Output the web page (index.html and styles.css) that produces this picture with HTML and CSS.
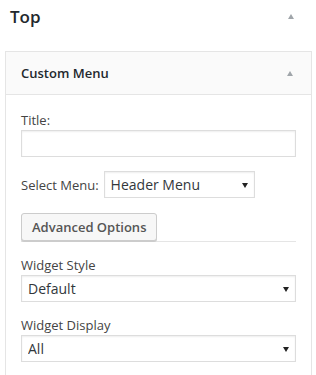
FILE: index.html
```html
<!DOCTYPE html>
<html lang="en">
<head>
    <meta charset="UTF-8">
    <meta name="viewport" content="width=device-width, initial-scale=1.0">
    <title>Widgets</title>
    <link rel="stylesheet" href="styles.css">
</head>
<body>
<div class="sidebar">
    <div class="sidebar-name">
        <h2>Top</h2>
        <span class="toggle"></span>
    </div>
    <div class="widget">
        <div class="widget-top">
            <h3>Custom Menu</h3>
            <span class="toggle"></span>
        </div>
        <div class="widget-inside">
            <div class="field">
                <label>Title:</label>
                <input type="text" class="text-input">
            </div>
            <div class="field inline">
                <label>Select Menu:</label>
                <div class="select small">
                    <select><option>Header Menu</option></select>
                </div>
            </div>
            <div class="advanced">
                <button>Advanced Options</button>
            </div>
            <div class="field">
                <label>Widget Style</label>
                <div class="select">
                    <select><option>Default</option></select>
                </div>
            </div>
            <div class="field">
                <label>Widget Display</label>
                <div class="select">
                    <select><option>All</option></select>
                </div>
            </div>
        </div>
    </div>
</div>
</body>
</html>
```

FILE: styles.css
```css
*{
    margin: 0;
    padding: 0;
    box-sizing: border-box;
}
body{
    background: #fff;
    font-family: "Open Sans", "Liberation Sans", sans-serif;
    font-size: 13px;
    color: #444;
}
.sidebar{
    padding: 0 4px 0 5px;
}
.sidebar-name{
    display: flex;
    justify-content: space-between;
    align-items: center;
    height: 32px;
    padding: 0 18px 0 5px;
    margin-bottom: 19px;
}
.sidebar-name h2{
    font-size: 17px;
    font-weight: 600;
    color: #23282d;
}
.toggle{
    width: 0;
    height: 0;
    border-left: 3.5px solid transparent;
    border-right: 3.5px solid transparent;
    border-bottom: 5px solid #a0a5aa;
}
.widget{
    border: 1px solid #e5e5e5;
    border-bottom: none;
    height: 330px;
}
.widget-top{
    display: flex;
    justify-content: space-between;
    align-items: center;
    height: 43px;
    padding: 0 18px 0 15px;
    background: #fafafa;
    border-bottom: 1px solid #e5e5e5;
}
.widget-top h3{
    font-size: 13px;
    font-weight: 600;
    color: #23282d;
}
.widget-inside{
    padding: 16px 15px 0 15px;
}
.field{
    margin-bottom: 14px;
}
.field label{
    display: block;
    line-height: 18px;
    margin-bottom: 1px;
}
.field.inline{
    display: flex;
    align-items: center;
}
.field.inline label{
    margin: 0 5px 0 0;
}
.text-input{
    display: block;
    width: 100%;
    height: 27px;
    border: 1px solid #ddd;
    box-shadow: inset 0 1px 2px rgba(0, 0, 0, 0.07);
    background: #fff;
}
.select{
    position: relative;
    width: 100%;
}
.select.small{
    width: 151px;
}
.select select{
    appearance: none;
    -webkit-appearance: none;
    display: block;
    width: 100%;
    height: 27px;
    padding: 0 20px 0 6px;
    border: 1px solid #ddd;
    border-radius: 0;
    background: #fff;
    font-family: "Open Sans", "Liberation Sans", sans-serif;
    font-size: 14px;
    color: #32373c;
    box-shadow: inset 0 1px 2px rgba(0, 0, 0, 0.07);
}
.select::after{
    content: "";
    position: absolute;
    right: 7px;
    top: 12px;
    border-left: 3px solid transparent;
    border-right: 3px solid transparent;
    border-top: 5px solid #222;
}
.advanced{
    margin-top: 15px;
    border-bottom: 1px solid #e5e5e5;
    margin-bottom: 14px;
}
.advanced button{
    display: block;
    height: 28px;
    padding: 0 10px;
    border: 1px solid #ccc;
    border-radius: 3px;
    background: #f7f7f7;
    box-shadow: 0 1px 0 #ccc;
    font-family: "Open Sans", "Liberation Sans", sans-serif;
    font-size: 13px;
    font-weight: 600;
    color: #555;
}
```
